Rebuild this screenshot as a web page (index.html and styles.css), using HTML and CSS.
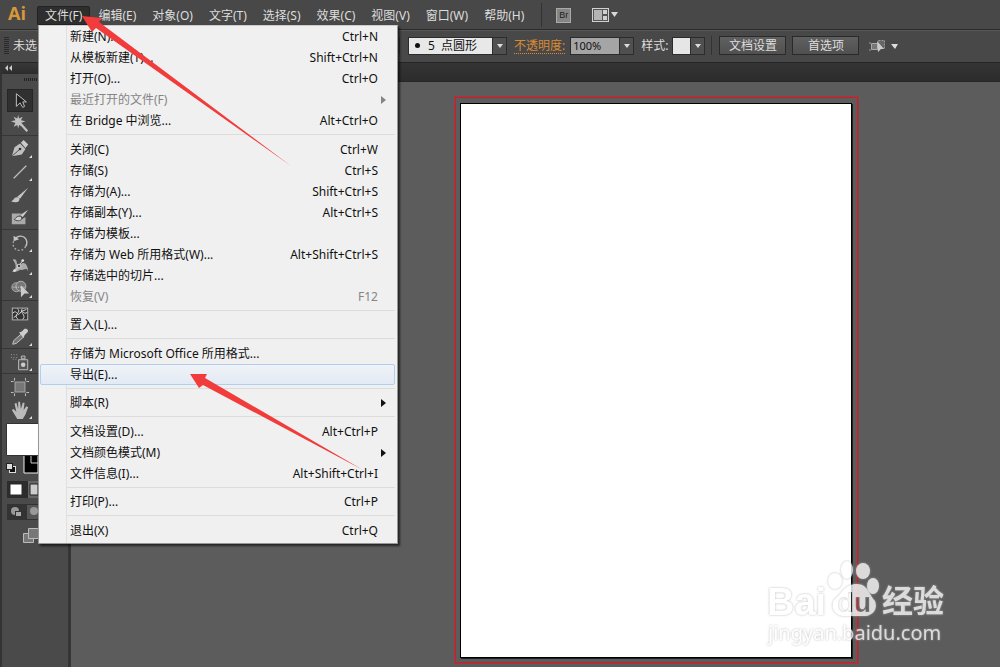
FILE: index.html
```html
<!doctype html>
<html lang="zh-CN">
    <head>
        <meta charset="utf-8">
        <title>Adobe Illustrator</title>
        <link rel="stylesheet" href="styles.css">
    </head>

    <body>
        <header class="menubar">
            <span class="logo">Ai</span>
            <nav class="menus">
                <div class="menu-anchor">
                    <button class="menu-title open">文件(F)</button>
                    <div class="dropdown">
                        <div class="menu-group">
                            <button class="item">新建(N)...<kbd>Ctrl+N</kbd></button>
                            <button class="item">从模板新建(T)...<kbd>Shift+Ctrl+N</kbd></button>
                            <button class="item">打开(O)...<kbd>Ctrl+O</kbd></button>
                            <button class="item has-sub" disabled>最近打开的文件(F)</button>
                            <button class="item">在 Bridge 中浏览...<kbd>Alt+Ctrl+O</kbd></button>
                        </div>
                        <div class="menu-group">
                            <button class="item">关闭(C)<kbd>Ctrl+W</kbd></button>
                            <button class="item">存储(S)<kbd>Ctrl+S</kbd></button>
                            <button class="item">存储为(A)...<kbd>Shift+Ctrl+S</kbd></button>
                            <button class="item">存储副本(Y)...<kbd>Alt+Ctrl+S</kbd></button>
                            <button class="item">存储为模板...</button>
                            <button class="item">存储为 Web 所用格式(W)...<kbd>Alt+Shift+Ctrl+S</kbd></button>
                            <button class="item">存储选中的切片...</button>
                            <button class="item" disabled>恢复(V)<kbd>F12</kbd></button>
                        </div>
                        <div class="menu-group">
                            <button class="item">置入(L)...</button>
                        </div>
                        <div class="menu-group">
                            <button class="item">存储为 Microsoft Office 所用格式...</button>
                            <button class="item hover">导出(E)...</button>
                        </div>
                        <div class="menu-group">
                            <button class="item has-sub">脚本(R)</button>
                        </div>
                        <div class="menu-group">
                            <button class="item">文档设置(D)...<kbd>Alt+Ctrl+P</kbd></button>
                            <button class="item has-sub">文档颜色模式(M)</button>
                            <button class="item">文件信息(I)...<kbd>Alt+Shift+Ctrl+I</kbd></button>
                        </div>
                        <div class="menu-group">
                            <button class="item">打印(P)...<kbd>Ctrl+P</kbd></button>
                        </div>
                        <div class="menu-group">
                            <button class="item">退出(X)<kbd>Ctrl+Q</kbd></button>
                        </div>
                    </div>
                </div>
                <button class="menu-title">编辑(E)</button>
                <button class="menu-title">对象(O)</button>
                <button class="menu-title">文字(T)</button>
                <button class="menu-title">选择(S)</button>
                <button class="menu-title">效果(C)</button>
                <button class="menu-title">视图(V)</button>
                <button class="menu-title">窗口(W)</button>
                <button class="menu-title">帮助(H)</button>
            </nav>
            <div class="app-buttons">
                <button class="bridge">Br</button>
                <button class="layout" aria-label="排列文档">
                    <svg width="27" height="16" viewBox="0 0 27 16">
                        <rect x="0.5" y="1.5" width="16" height="13" fill="#555" stroke="#d0d0d0"/>
                        <path d="M2 3h8v10H2z" fill="#b4b4b4"/>
                        <path d="M11 3h4v4h-4zM11 9h4v4h-4z" fill="#d0d0d0"/>
                        <path d="M19 5h7l-3.500 5z" fill="#d8d8d8"/>
                    </svg>
                </button>
            </div>
        </header>

        <section class="controlbar">
            <div class="selection-state"><i class="grip"></i>未选</div>
            <button class="combo brush">
                <span class="combo-text"><i class="dot"></i>5 &nbsp;点圆形</span>
                <span class="caret"></span>
            </button>
            <label class="opacity-label" for="opacity">不透明度:</label>
            <div class="combo opacity">
                <input id="opacity" type="text" value="100%">
                <button class="caret" aria-label="不透明度选项"></button>
            </div>
            <span class="style-label">样式:</span>
            <button class="combo style" aria-label="图形样式">
                <span class="swatch"></span>
                <span class="caret"></span>
            </button>
            <div class="doc-buttons">
                <button class="push">文档设置</button>
                <button class="push">首选项</button>
            </div>
            <button class="similar" aria-label="选择类似的对象">
                <svg width="30" height="16" viewBox="0 0 30 16">
                    <path d="M2.500 5.500h6v6h-6z" fill="#777" stroke="#aaa"/>
                    <path d="M0 5h2M0 12h2" stroke="#999"/>
                    <path d="M9.500 2.500h6v8h-6z" fill="#666" stroke="#999" stroke-dasharray="2 1"/>
                    <path d="M8 3l7 8-3 0-3 3z" fill="#ccc"/>
                    <path d="M22 6h7l-3 5z" fill="#ddd"/>
                </svg>
            </button>
        </section>

        <main class="workspace">
            <aside class="tools">
                <div class="tools-head">
                    <svg width="8" height="6" viewBox="0 0 8 6"><path d="M3 0v6L0 3zM7 0v6L4 3z" fill="#ccc"/></svg>
                </div>
                <i class="grip-row"></i>

                <div class="tool-group">
                    <button class="tool active" aria-label="选择">
                        <svg viewBox="0 0 22 22"><path d="M7 3v14l4-4 3 5 2-1-2-5h4z" fill="#222" stroke="#ccc"/></svg>
                    </button>
                    <button class="tool" aria-label="魔棒">
                        <svg viewBox="0 0 22 22"><path d="M9 1l1 4 4-2-2 4 5 1-5 2 2 4-4-2-1 4-1-4-4 2 2-4-5-2 5-1-2-4 4 2z" fill="#c0c0c0"/><path d="M11 10l8 9" stroke="#c0c0c0" stroke-width="2.500"/></svg>
                    </button>
                </div>
                <div class="tool-group">
                    <button class="tool more" aria-label="钢笔">
                        <svg viewBox="0 0 22 22"><path d="M2 19l3-10 6-4 6 6-4 6z" fill="#c0c0c0"/><path d="M12 4l3-3 5 5-3 4z" fill="#ccc"/><path d="M2 19l8-7" stroke="#444"/><circle cx="11" cy="11" r="1.500" fill="#333"/></svg>
                    </button>
                    <button class="tool more" aria-label="直线段">
                        <svg viewBox="0 0 22 22"><path d="M4 18L18 4" stroke="#c4c4c4" stroke-width="1.500"/></svg>
                    </button>
                    <button class="tool" aria-label="画笔">
                        <svg viewBox="0 0 22 22"><path d="M20 3l-9 12-3-2z" fill="#c4c4c4"/><path d="M10 14c2 5-4 6-9 4 4-1 3-6 9-4z" fill="#c4c4c4"/></svg>
                    </button>
                    <button class="tool" aria-label="斑点画笔">
                        <svg viewBox="0 0 22 22"><path d="M2 6h11l-5 5 4 2 5-3v8H2z" fill="#aaa"/><path d="M20 2l-6 8-3-2z" fill="#ccc"/><path d="M5 13c2-5 8-5 8-2s-4 4-8 2z" fill="#ccc" stroke="#444"/></svg>
                    </button>
                </div>
                <div class="tool-group">
                    <button class="tool more" aria-label="旋转">
                        <svg viewBox="0 0 22 22"><path d="M6 6a7 7 0 0 1 11 9" fill="none" stroke="#c4c4c4" stroke-width="1.500"/><path d="M4 9a7 7 0 0 0 13 6" fill="none" stroke="#aaa" stroke-width="1.500" stroke-dasharray="2 2"/><path d="M4 3v6l6-2z" fill="#c4c4c4"/></svg>
                    </button>
                    <button class="tool more" aria-label="宽度">
                        <svg viewBox="0 0 22 22"><path d="M3 4c7-2 2 7 8 6 5-6 9 1 9 7-2-6-6 0-9-2-3 2-5 3-9 2 6-3 5-8 1-13z" fill="#aaa"/><path d="M6 16L14 5" stroke="#ddd"/><circle cx="10" cy="11" r="2" fill="#444" stroke="#ddd"/><circle cx="14" cy="5" r="1.500" fill="#ddd"/><circle cx="5" cy="16" r="1.500" fill="#ddd"/></svg>
                    </button>
                    <button class="tool more" aria-label="形状生成器">
                        <svg viewBox="0 0 22 22"><circle cx="7" cy="9" r="5" fill="#777" stroke="#aaa"/><circle cx="12" cy="8" r="5.500" fill="#777" stroke="#bbb"/><path d="M3 9h13" stroke="#ddd" stroke-dasharray="1 1"/><path d="M12 7v13l4-4h5z" fill="#ccc"/></svg>
                    </button>
                </div>
                <div class="tool-group">
                    <button class="tool" aria-label="网格">
                        <svg viewBox="0 0 22 22"><rect x="2.500" y="4.500" width="17" height="13" fill="#333" stroke="#bbb"/><path d="M3 10c5-5 5 5 8 0s4 3 8-1M8 5c6 4-6 7 1 12M14 5c-5 4 5 7 0 12M4 15l4-3M13 8l5-2" fill="none" stroke="#ddd"/></svg>
                    </button>
                    <button class="tool more" aria-label="吸管">
                        <svg viewBox="0 0 22 22"><path d="M12 8l3 3-8 7-4 1 1-4z" fill="#777" stroke="#ccc"/><path d="M10 6l3-1 3-3c3-1 5 2 3 4l-3 3-1 3z" fill="#ccc"/></svg>
                    </button>
                </div>
                <div class="tool-group">
                    <button class="tool more" aria-label="符号喷枪">
                        <svg viewBox="0 0 22 22"><path d="M9.500 8.500h10v11h-10zM12.500 4.500h4v3h-4z" fill="#555" stroke="#c4c4c4"/><circle cx="14.500" cy="14" r="2.500" fill="#ccc"/><path d="M1 3h9M1 6h9M3 8h5" stroke="#aaa" stroke-dasharray="1 2"/></svg>
                    </button>
                </div>
                <div class="tool-group">
                    <button class="tool" aria-label="画板">
                        <svg viewBox="0 0 22 22"><rect x="5.500" y="5.500" width="11" height="11" fill="#777" stroke="#aaa"/><path d="M5 1v3M17 1v3M5 18v3M17 18v3M1 5h3M18 5h3M1 17h3M18 17h3" stroke="#ccc"/></svg>
                    </button>
                    <button class="tool more" aria-label="抓手">
                        <svg viewBox="0 0 22 22"><path d="M2 11l2-1 3 3-2-9 2-1 2 7 0-8h2l1 8 2-7h2l-1 8 3-4 2 1-3 8-3 5H8z" fill="#bbb"/></svg>
                    </button>
                </div>

                <svg class="color-wells" width="32" height="128" viewBox="0 0 32 128">
                    <path d="M18 34h14v18H18z" fill="#000" stroke="#eee"/>
                    <path d="M25 30v12h7" fill="none" stroke="#ccc"/>
                    <path d="M0.500 2.500h32v32h-32z" fill="#fff" stroke="#333"/>
                    <rect x="3.500" y="45.500" width="6" height="6" fill="#111" stroke="#ddd"/>
                    <rect x="0.500" y="42.500" width="6" height="6" fill="#ddd" stroke="#222"/>
                    <path d="M1 60h31v17H1z" fill="#2c2c2c"/>
                    <path d="M22 60h10v17H22z" fill="#666"/>
                    <path d="M4.500 63.500h11v10h-11z" fill="#fff"/>
                    <path d="M24 63h8v11h-8z" fill="#ccc" stroke="#222"/>
                    <path d="M1 83h31v16H1z" fill="#333"/>
                    <path d="M21 84h11v14H21z" fill="#555"/>
                    <circle cx="9" cy="90" r="4" fill="#999"/>
                    <rect x="9.500" y="90.500" width="6" height="5" fill="#aaa" stroke="#333"/>
                    <circle cx="28" cy="90" r="4" fill="#999"/>
                    <path d="M17.500 112.500h10v9h-10z" fill="#777" stroke="#bbb"/>
                    <path d="M22.500 107.500h12v10h-12z" fill="#777" stroke="#bbb"/>
                </svg>
            </aside>

            <div class="document">
                <div class="tabstrip"></div>
                <div class="bleed">
                    <div class="artboard"></div>
                </div>
            </div>
        </main>

        <svg class="arrows" width="400" height="480" viewBox="0 0 400 480">
            <path d="M82 16l20 2-3 4 192 144L96 28l-4 4z" fill="#f23b3b"/>
            <path d="M190 374l17 0-2 4 158 92-160-85-4 3z" fill="#f23b3b"/>
        </svg>

        <svg class="watermark" width="182" height="92" viewBox="0 0 182 92">
            <mask id="paw">
                <path d="M0 0h182v92H0z" fill="#fff"/>
                <text class="du" x="74" y="52">du</text>
            </mask>
            <g class="mark">
                <text class="bai" x="4" y="55">Bai</text>
                <ellipse cx="72" cy="21" rx="7" ry="8"/>
                <ellipse cx="84" cy="10" rx="6" ry="9"/>
                <ellipse cx="100" cy="11" rx="7" ry="8"/>
                <ellipse cx="110" cy="26" rx="6" ry="8"/>
                <path mask="url(#paw)" d="M94 24c11 0 12 11 18 17 3 8-2 14-9 15H82c-10 0-15-8-11-16 8-6 10-16 23-16z"/>
                <text class="jingyan" x="119" y="52">经验</text>
                <text class="site" x="5" y="80">jingyan.baidu.com</text>
            </g>
        </svg>
    </body>
</html>
```

FILE: styles.css
```css
* {
    box-sizing: border-box;
}
body {
    display: flex;
    flex-direction: column;
    position: relative;
    min-height: 100vh;
    margin: 0;
    overflow: hidden;
    background: #5c5c5c;
    color: #ddd;
    font: 12px/18px 'Noto Sans', 'Noto Sans CJK SC', sans-serif;
}
button,
input {
    margin: 0;
    padding: 0;
    border: none;
    background: none;
    color: inherit;
    font: inherit;
}
svg {
    display: block;
}

/* menu bar */
.menubar {
    display: flex;
    height: 30px;
    background: #484848;
    border-bottom: 1px solid #2a2a2a;
}
.logo {
    width: 37px;
    padding-left: 8px;
    color: #d8973a;
    font: bold 18px/26px 'Open Sans', sans-serif;
}
.menus {
    display: flex;
    padding-top: 6px;
}
.menu-anchor {
    position: relative;
    z-index: 2;
    height: 19px;
}
.menu-title {
    height: 19px;
    padding: 0 8px;
    line-height: 16px;
    white-space: nowrap;
}
.menu-title.open {
    background: #2e2e2e;
    border: 1px solid #222;
    border-radius: 2px 2px 0 0;
    padding: 0 7px;
}
.app-buttons {
    display: flex;
    align-items: center;
    gap: 21px;
    height: 24px;
    margin: 3px 0 0 9px;
    padding-left: 14px;
    border-left: 1px solid #333;
}
.bridge {
    width: 15px;
    height: 15px;
    background: #858585;
    border: 1px solid #aaa;
    color: #222;
    font: 9px/12px 'Liberation Sans', sans-serif;
}

/* file menu */
.dropdown {
    position: absolute;
    top: 100%;
    left: 1px;
    width: 360px;
    padding: 0 2px 2px 1px;
    background: linear-gradient(90deg, #f1f1f1 27px, #e0e0e0 27px, #e0e0e0 28px, #f0f0f0 28px);
    border: 1px solid #979797;
    border-top-color: #ccc;
    box-shadow: 2px 2px 2px rgba(0, 0, 0, 0.6);
    color: #111;
}
.menu-group + .menu-group {
    padding-top: 8px;
    background: linear-gradient(#dcdcdc, #dcdcdc) 27px 3px / 100% 1px no-repeat;
}
.menu-group + .menu-group:nth-child(odd) {
    padding-top: 7px;
}
.item {
    display: flex;
    justify-content: space-between;
    align-items: center;
    width: 100%;
    height: 21px;
    padding: 0 16px 0 29px;
    border: 1px solid transparent;
    border-radius: 2px;
    white-space: nowrap;
}
.item kbd {
    font: inherit;
}
.item:disabled {
    color: #858585;
}
.item.hover {
    border-color: #aecff0;
    background: linear-gradient(#f0f3f7, #e2eaf4);
}
.item.has-sub {
    padding-right: 8px;
}
.item.has-sub::after {
    content: '';
    border: 4px solid transparent;
    border-left: 5px solid currentColor;
    border-right: none;
}

/* control bar */
.controlbar {
    display: flex;
    align-items: center;
    height: 33px;
    padding-bottom: 2px;
    background: #484848;
    border-top: 1px solid #585858;
    border-bottom: 1px solid #252525;
    white-space: nowrap;
}
.selection-state {
    display: flex;
    align-items: center;
    gap: 4px;
    width: 400px;
    padding-left: 4px;
    border-right: 1px solid #333;
    margin-right: 8px;
}
.grip {
    width: 5px;
    height: 18px;
    background: repeating-linear-gradient(#2a2a2a 0 1px, #484848 1px 2px);
}
.combo {
    display: flex;
    height: 18px;
    border: 1px solid #2c2c2c;
    line-height: 16px;
}
.brush {
    width: 99px;
}
.combo-text {
    display: flex;
    align-items: center;
    flex: 1;
    padding-left: 6px;
    background: #e8e8e8;
    color: #111;
}
.dot {
    width: 5px;
    height: 5px;
    margin-right: 8px;
    background: #111;
    border-radius: 50%;
}
.caret {
    display: flex;
    align-items: center;
    justify-content: center;
    width: 14px;
    height: 16px;
    background: #505050;
    border-left: 1px solid #2c2c2c;
}
.caret::after {
    content: '';
    border: 3px solid transparent;
    border-top: 4px solid #ddd;
    border-bottom: none;
}
.opacity-label {
    margin: 0 5px 0 7px;
    border-bottom: 1px dotted #d98a35;
    color: #d98a35;
    line-height: 15px;
}
.opacity {
    width: 64px;
}
.opacity input {
    flex: 1;
    min-width: 0;
    padding-left: 2px;
    background: #a5a5a5;
    color: #111;
    font-size: 11px;
}
.style-label {
    margin: 0 4px 0 7px;
}
.style {
    width: 33px;
}
.swatch {
    flex: 1;
    background: #e6e6e6;
}
.doc-buttons {
    display: flex;
    gap: 6px;
    margin-left: 6px;
    padding-left: 7px;
    border-left: 1px solid #333;
}
.push {
    width: 67px;
    height: 19px;
    background: linear-gradient(#606060, #505050);
    border: 1px solid #2a2a2a;
    line-height: 16px;
}
.similar {
    margin-left: 10px;
}

/* workspace */
.workspace {
    display: flex;
    flex: 1;
}
.tools {
    width: 71px;
    background: #4a4a4a;
    border-left: 2px solid #333;
    border-right: 3px solid #353535;
}
.tools-head {
    height: 11px;
    padding: 2px 0 0 3px;
    background: linear-gradient(#383838, #2c2c2c);
}
.grip-row {
    display: block;
    width: 22px;
    height: 3px;
    margin: 4px auto 8px;
    background: repeating-linear-gradient(90deg, #222 0 1px, #484848 1px 2px);
}
.tool-group + .tool-group {
    border-top: 1px solid #363636;
    padding-top: 1px;
}
.tool {
    display: flex;
    align-items: center;
    justify-content: center;
    position: relative;
    width: 26px;
    height: 23px;
    margin-left: 5px;
}
.tool svg {
    width: 20px;
    height: 20px;
}
.tool.active {
    background: #303030;
    border: 1px solid #262626;
}
.tool.more::after {
    content: '';
    position: absolute;
    right: 1px;
    bottom: 2px;
    border-left: 3px solid transparent;
    border-bottom: 3px solid #ddd;
}
.color-wells {
    margin-left: 4px;
}

.document {
    display: flex;
    flex-direction: column;
    flex: 1;
}
.tabstrip {
    height: 19px;
    background: linear-gradient(#343434, #2c2c2c);
    border-bottom: 1px solid #282828;
}
.bleed {
    display: flex;
    flex: 1;
    margin: 15px 142px 4px 384px;
    padding: 5px 5px 4px 4px;
    border: 1px solid #d81822;
    box-shadow: 0 0 0 1px rgba(200, 30, 40, 0.4);
}
.artboard {
    flex: 1;
    background: #fff;
    border: 1px solid #000;
    box-shadow: 1px 1px #222;
}

/* annotation arrows and site mark */
.arrows {
    position: absolute;
    top: 0;
    left: 0;
    z-index: 3;
    pointer-events: none;
}
.watermark {
    position: absolute;
    right: 55px;
    bottom: 15px;
}
.mark {
    fill: #fff;
    opacity: 0.78;
    filter: drop-shadow(0 0 1px #aaa);
}
.bai {
    font: bold 38px 'Liberation Sans', sans-serif;
}
.jingyan {
    font: bold 31px 'Noto Sans CJK SC', sans-serif;
}
.site {
    font: 20px 'Noto Sans', sans-serif;
}
.du {
    fill: #000;
    font: bold 28px 'Liberation Sans', sans-serif;
}
```
